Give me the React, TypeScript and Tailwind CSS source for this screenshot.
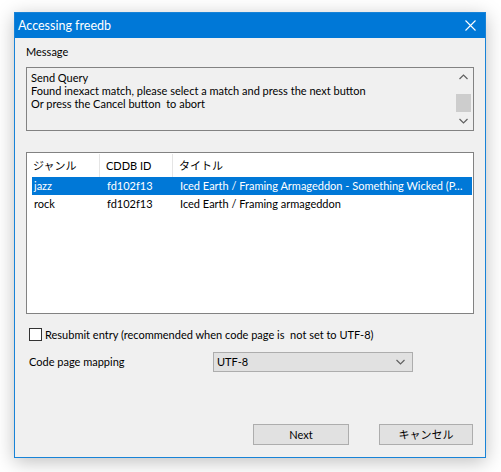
import React from 'react';

const rows = [
  { genre: 'jazz', id: 'fd102f13', title: 'Iced Earth / Framing Armageddon - Something Wicked (P…', selected: true },
  { genre: 'rock', id: 'fd102f13', title: 'Iced Earth / Framing armageddon', selected: false },
];

const Chevron: React.FC<{ dir: 'up' | 'down'; className?: string }> = ({ dir, className }) => (
  <svg width="9" height="6" viewBox="0 0 9 6" className={className}>
    <path
      d={dir === 'up' ? 'M0.5 5 L4.5 1 L8.5 5' : 'M0.5 1 L4.5 5 L8.5 1'}
      fill="none"
      stroke="#606060"
      strokeWidth="1.2"
    />
  </svg>
);

const App: React.FC = () => {
  return (
    <div
      className="w-[501px] h-[472px] bg-white pt-[12px] pl-[14px] text-[11px] leading-[14px] text-black"
      style={{ fontFamily: 'Lato, "Noto Sans CJK JP", sans-serif' }}
    >
      <div className="w-[472px] h-[446px] border border-[#1883d7] bg-[#f0f0f0] flex flex-col shadow-[0_4px_18px_rgba(0,0,0,0.25)]">
        {/* title bar */}
        <div className="h-[25px] bg-[#0078d7] flex items-center justify-between pl-[3px] pr-[9px] text-white text-[12.5px]">
          <span>Accessing freedb</span>
          <svg width="11" height="11" viewBox="0 0 11 11">
            <path d="M0.5 0.5 L10.5 10.5 M10.5 0.5 L0.5 10.5" stroke="white" strokeWidth="1.1" />
          </svg>
        </div>

        <div className="flex flex-col px-[11px] flex-1">
          <div className="mt-[7px] h-[14px]">Message</div>

          {/* message box */}
          <div className="mt-[8px] h-[64px] border border-[#828282] bg-[#f0f0f0] flex">
            <div className="flex-1 pl-[4px] pt-[3px] leading-[13px]">
              <div>Send Query</div>
              <div>Found inexact match, please select a match and press the next button</div>
              <div>Or press the Cancel button&nbsp; to abort</div>
            </div>
            <div className="w-[17px] mr-[1px] my-[1px] flex flex-col items-center">
              <div className="h-[17px] w-full flex items-center justify-center">
                <Chevron dir="up" />
              </div>
              <div className="mt-[8px] h-[19px] w-[15px] bg-[#cdcdcd]" />
              <div className="flex-1" />
              <div className="h-[17px] w-full flex items-center justify-center">
                <Chevron dir="down" />
              </div>
            </div>
          </div>

          {/* list */}
          <div className="mt-[21px] h-[162px] border border-[#828282] bg-white pl-[5px] pr-[1px]">
            <div className="h-[24px] flex items-center pt-[1px]">
              <div className="w-[68px] pl-[1px] flex items-center h-full border-r border-[#e5e5e5]">ジャンル</div>
              <div className="w-[73px] pl-[6px] flex items-center h-full border-r border-[#e5e5e5]">CDDB ID</div>
              <div className="flex-1 pl-[6px]">タイトル</div>
            </div>
            {rows.map(r => (
              <div
                key={r.genre}
                className={`h-[18px] flex items-center ${r.selected ? 'bg-[#0078d7] text-white' : ''}`}
              >
                <div className="w-[68px] pl-[2px]">{r.genre}</div>
                <div className="w-[73px] pl-[7px]">{r.id}</div>
                <div className="flex-1 min-w-0 pl-[7px] truncate">{r.title}</div>
              </div>
            ))}
          </div>

          {/* checkbox */}
          <div className="mt-[14px] h-[13px] flex items-center pl-[3px]">
            <div className="w-[13px] h-[13px] border border-[#333333] bg-white" />
            <span className="ml-[3px]">Resubmit entry (recommended when code page is&nbsp; not set to UTF-8)</span>
          </div>

          {/* code page */}
          <div className="mt-[11px] h-[20px] flex items-center">
            <span className="w-[187px] pl-[3px]">Code page mapping</span>
            <div className="w-[200px] h-[20px] border border-[#adadad] bg-[#e1e1e1] flex items-center justify-between pl-[3px] pr-[7px]">
              <span>UTF-8</span>
              <Chevron dir="down" />
            </div>
          </div>

          <div className="flex-1" />

          {/* buttons */}
          <div className="flex justify-end gap-[30px] mb-[12px] pr-[1px]">
            <button className="w-[96px] h-[21px] border border-[#adadad] bg-[#e1e1e1] flex items-center justify-center">
              Next
            </button>
            <button className="w-[94px] h-[21px] border border-[#adadad] bg-[#e1e1e1] flex items-center justify-center">
              キャンセル
            </button>
          </div>
        </div>
      </div>
    </div>
  );
};

export default App;
